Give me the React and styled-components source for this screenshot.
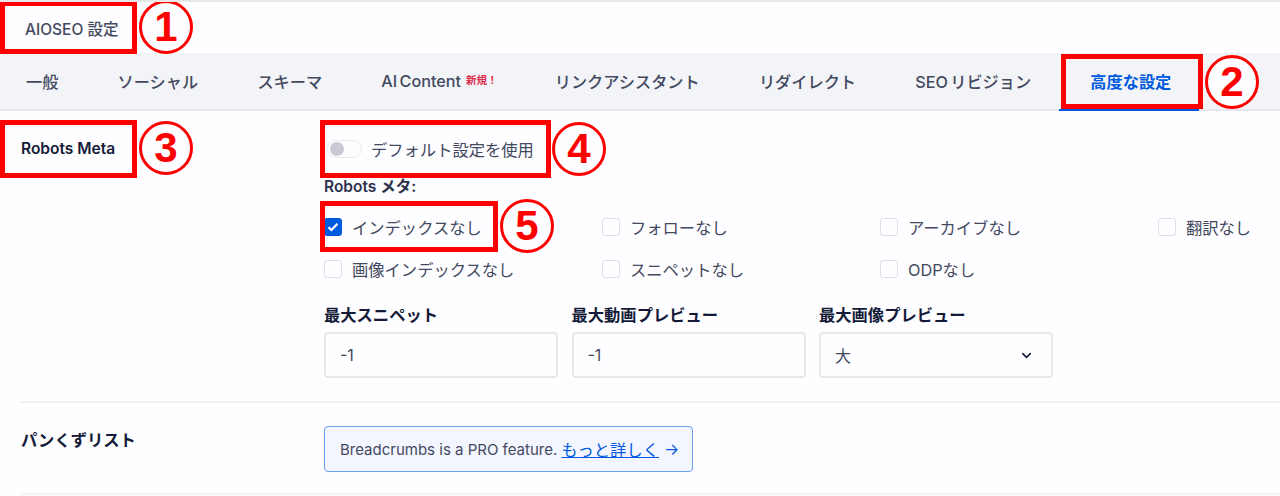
import styled, { createGlobalStyle } from "styled-components";
import { ChevronDown } from "lucide-react";

const GlobalStyle = createGlobalStyle`
  html, body {
    margin: 0;
    padding: 0;
    background: #fefdff;
  }
  body {
    font-family: Inter, "Noto Sans CJK JP", sans-serif;
    color: #141b38;
    overflow: hidden;
  }
`;

const Page = styled.div`
  position: relative;
  width: 1280px;
  height: 496px;
  overflow: hidden;
  border-top: 2px solid #e8e8eb;
  box-sizing: border-box;
`;

const TitleBar = styled.div`
  height: 51px;
  display: flex;
  align-items: center;
  padding-left: 25px;
  font-size: 15.5px;
  font-weight: 500;
  color: #434960;
`;

const TabBar = styled.nav`
  height: 58px;
  box-sizing: border-box;
  display: flex;
  padding-left: 26px;
  gap: 59.2px;
  background: #f3f4f7;
  border-bottom: 2px solid #e8e8eb;
`;

const Tab = styled.div`
  position: relative;
  display: flex;
  align-items: center;
  font-size: 16.2px;
  font-weight: ${(p) => (p.$active ? 700 : 500)};
  word-spacing: -2px;
  white-space: nowrap;
  color: ${(p) => (p.$active ? "#005ae0" : "#434960")};

  ${(p) =>
    p.$active &&
    `&::after {
      content: "";
      position: absolute;
      left: -31px;
      right: -28px;
      bottom: -2px;
      height: 2px;
      background: #005ae0;
    }`}
`;

const NewBadge = styled.span`
  align-self: flex-start;
  margin: 19px -2px 0 5px;
  font-size: 10.5px;
  font-weight: 700;
  color: #df2a4a;
`;

const Section = styled.section`
  margin: 0 0 0 21px;
  padding-left: 303px;
  position: relative;
  display: block;
  border-bottom: 2px solid #f0f0f2;
`;

const RobotsSection = styled(Section)`
  height: 292px;
  padding-top: 22px;
  box-sizing: border-box;
`;

const BreadcrumbSection = styled(Section)`
  height: 92px;
  padding-top: 23px;
  box-sizing: border-box;
  border-bottom-color: #f4f4f6;
`;

const SectionLabel = styled.div`
  position: absolute;
  left: 0;
  top: ${(p) => p.$top}px;
  font-size: 15.5px;
  font-weight: 600;
  line-height: 20px;
  color: #141b38;
`;

const JpLabel = styled(SectionLabel)`
  font-size: 16.3px;
`;

const ToggleRow = styled.div`
  display: flex;
  align-items: center;
  height: 32px;
  gap: 9px;
  padding-left: 3px;
  font-size: 16.3px;
  color: #434960;
`;

const ToggleTrack = styled.span`
  display: flex;
  align-items: center;
  box-sizing: border-box;
  width: 35px;
  height: 18px;
  padding-left: 2px;
  border: 1px solid #e8e8eb;
  border-radius: 9px;
  background: #fefdff;
`;

const ToggleKnob = styled.span`
  width: 14px;
  height: 14px;
  border-radius: 50%;
  background: #c9c9d4;
`;

const FieldTitle = styled.div`
  margin-top: 12px;
  font-size: 15.5px;
  font-weight: 600;
  line-height: 20px;
  color: #2c324c;
`;

const CheckGrid = styled.div`
  display: grid;
  grid-template-columns: repeat(4, 278px);
  grid-auto-rows: 42px;
  margin-top: 9px;
`;

const CheckItem = styled.label`
  display: flex;
  align-items: center;
  gap: 10px;
  height: 42px;
  font-size: 16.3px;
  color: #434960;
  white-space: nowrap;
`;

const CheckBox = styled.span`
  display: flex;
  align-items: center;
  justify-content: center;
  box-sizing: border-box;
  width: 18px;
  height: 18px;
  border-radius: 3px;
  border: 1px solid ${(p) => (p.$checked ? "#005ae0" : "#dfdfe5")};
  background: ${(p) => (p.$checked ? "#005ae0" : "#fefdff")};
`;

const InputRow = styled.div`
  display: grid;
  grid-template-columns: repeat(3, 234px);
  column-gap: 13.5px;
  margin-top: 13px;
`;

const Field = styled.div`
  display: flex;
  flex-direction: column;
  gap: 5px;
`;

const FieldLabel = styled.div`
  font-size: 16.3px;
  font-weight: 700;
  line-height: 24px;
  color: #141b38;
`;

const TextInput = styled.input`
  box-sizing: border-box;
  width: 234px;
  height: 46px;
  padding: 0 14px;
  border: 2px solid #e8e8eb;
  border-radius: 4px;
  background: #fefdff;
  font: 400 16px Inter, "Noto Sans CJK JP", sans-serif;
  color: #434960;
  outline: none;
`;

const SelectBox = styled.div`
  display: flex;
  align-items: center;
  justify-content: space-between;
  box-sizing: border-box;
  width: 234px;
  height: 46px;
  padding: 0 17px 0 14px;
  border: 2px solid #e8e8eb;
  border-radius: 4px;
  font-size: 16px;
  color: #434960;
`;

const Notice = styled.div`
  display: inline-flex;
  align-items: center;
  box-sizing: border-box;
  height: 46px;
  width: 369px;
  padding-left: 15px;
  border: 1px solid #6a9ff0;
  border-radius: 4px;
  background: #f3f6fe;
  font-size: 15px;
  color: #434960;
  white-space: nowrap;
`;

const NoticeLink = styled.a`
  margin-left: 4px;
  font-size: 16.3px;
  color: #005ae0;
  text-decoration: underline;
`;

const NoticeArrow = styled.span`
  margin-left: 5px;
  font-size: 16px;
  color: #005ae0;
`;

const RedBox = styled.div`
  position: absolute;
  box-sizing: border-box;
  left: ${(p) => p.$x}px;
  top: ${(p) => p.$y}px;
  width: ${(p) => p.$w}px;
  height: ${(p) => p.$h}px;
  border: 5px solid #fe0000;
  pointer-events: none;
`;

const Marker = styled.div`
  position: absolute;
  box-sizing: border-box;
  left: ${(p) => p.$cx - 27}px;
  top: ${(p) => p.$cy - 29}px;
  width: 54px;
  height: 54px;
  display: flex;
  align-items: center;
  justify-content: center;
  border: 3px solid #fe0000;
  border-radius: 50%;
  background: #fefdff;
  font-family: "Liberation Sans", sans-serif;
  font-size: 42px;
  font-weight: 700;
  line-height: 1;
  color: #fe0000;
`;

const tabs = [
  "一般",
  "ソーシャル",
  "スキーマ",
  "AI Content",
  "リンクアシスタント",
  "リダイレクト",
  "SEO リビジョン",
  "高度な設定",
];

const robots = [
  { label: "インデックスなし", checked: true },
  { label: "フォローなし" },
  { label: "アーカイブなし" },
  { label: "翻訳なし" },
  { label: "画像インデックスなし" },
  { label: "スニペットなし" },
  { label: "ODPなし" },
];

const boxes = [
  { x: 0, y: -1, w: 137, h: 53 },
  { x: 1061, y: 52, w: 142, h: 55 },
  { x: 0, y: 118, w: 137, h: 58 },
  { x: 320, y: 118, w: 231, h: 58 },
  { x: 320, y: 199, w: 178, h: 51 },
];

const markers = [
  { n: 1, cx: 166, cy: 27 },
  { n: 2, cx: 1232, cy: 82 },
  { n: 3, cx: 166, cy: 148 },
  { n: 4, cx: 579, cy: 149 },
  { n: 5, cx: 527, cy: 226 },
];

const App = () => {
  return (
    <Page>
      <GlobalStyle />
      <TitleBar>AIOSEO 設定</TitleBar>

      <TabBar>
        {tabs.map((tab) => (
          <Tab key={tab} $active={tab === "高度な設定"}>
            {tab}
            {tab === "AI Content" && <NewBadge>新規！</NewBadge>}
          </Tab>
        ))}
      </TabBar>

      <RobotsSection>
        <SectionLabel $top={28}>Robots Meta</SectionLabel>
        <ToggleRow>
          <ToggleTrack>
            <ToggleKnob />
          </ToggleTrack>
          デフォルト設定を使用
        </ToggleRow>
        <FieldTitle>Robots メタ:</FieldTitle>
        <CheckGrid>
          {robots.map((item) => (
            <CheckItem key={item.label}>
              <CheckBox $checked={item.checked}>
                {item.checked && (
                  <svg width="12" height="10" viewBox="0 0 12 10" fill="none">
                    <path
                      d="M1.5 5.2 4.4 8 10.5 1.8"
                      stroke="#fff"
                      strokeWidth="2.2"
                    />
                  </svg>
                )}
              </CheckBox>
              {item.label}
            </CheckItem>
          ))}
        </CheckGrid>
        <InputRow>
          <Field>
            <FieldLabel>最大スニペット</FieldLabel>
            <TextInput defaultValue="-1" />
          </Field>
          <Field>
            <FieldLabel>最大動画プレビュー</FieldLabel>
            <TextInput defaultValue="-1" />
          </Field>
          <Field>
            <FieldLabel>最大画像プレビュー</FieldLabel>
            <SelectBox>
              大
              <ChevronDown size={15} strokeWidth={2.5} color="#141b38" />
            </SelectBox>
          </Field>
        </InputRow>
      </RobotsSection>

      <BreadcrumbSection>
        <JpLabel $top={27}>パンくずリスト</JpLabel>
        <Notice>
          Breadcrumbs is a PRO feature.
          <NoticeLink>もっと詳しく</NoticeLink>
          <NoticeArrow>→</NoticeArrow>
        </Notice>
      </BreadcrumbSection>

      {boxes.map((b) => (
        <RedBox key={b.x + "-" + b.y} $x={b.x} $y={b.y} $w={b.w} $h={b.h} />
      ))}
      {markers.map((m) => (
        <Marker key={m.n} $cx={m.cx} $cy={m.cy}>
          {m.n}
        </Marker>
      ))}
    </Page>
  );
};

export default App;
